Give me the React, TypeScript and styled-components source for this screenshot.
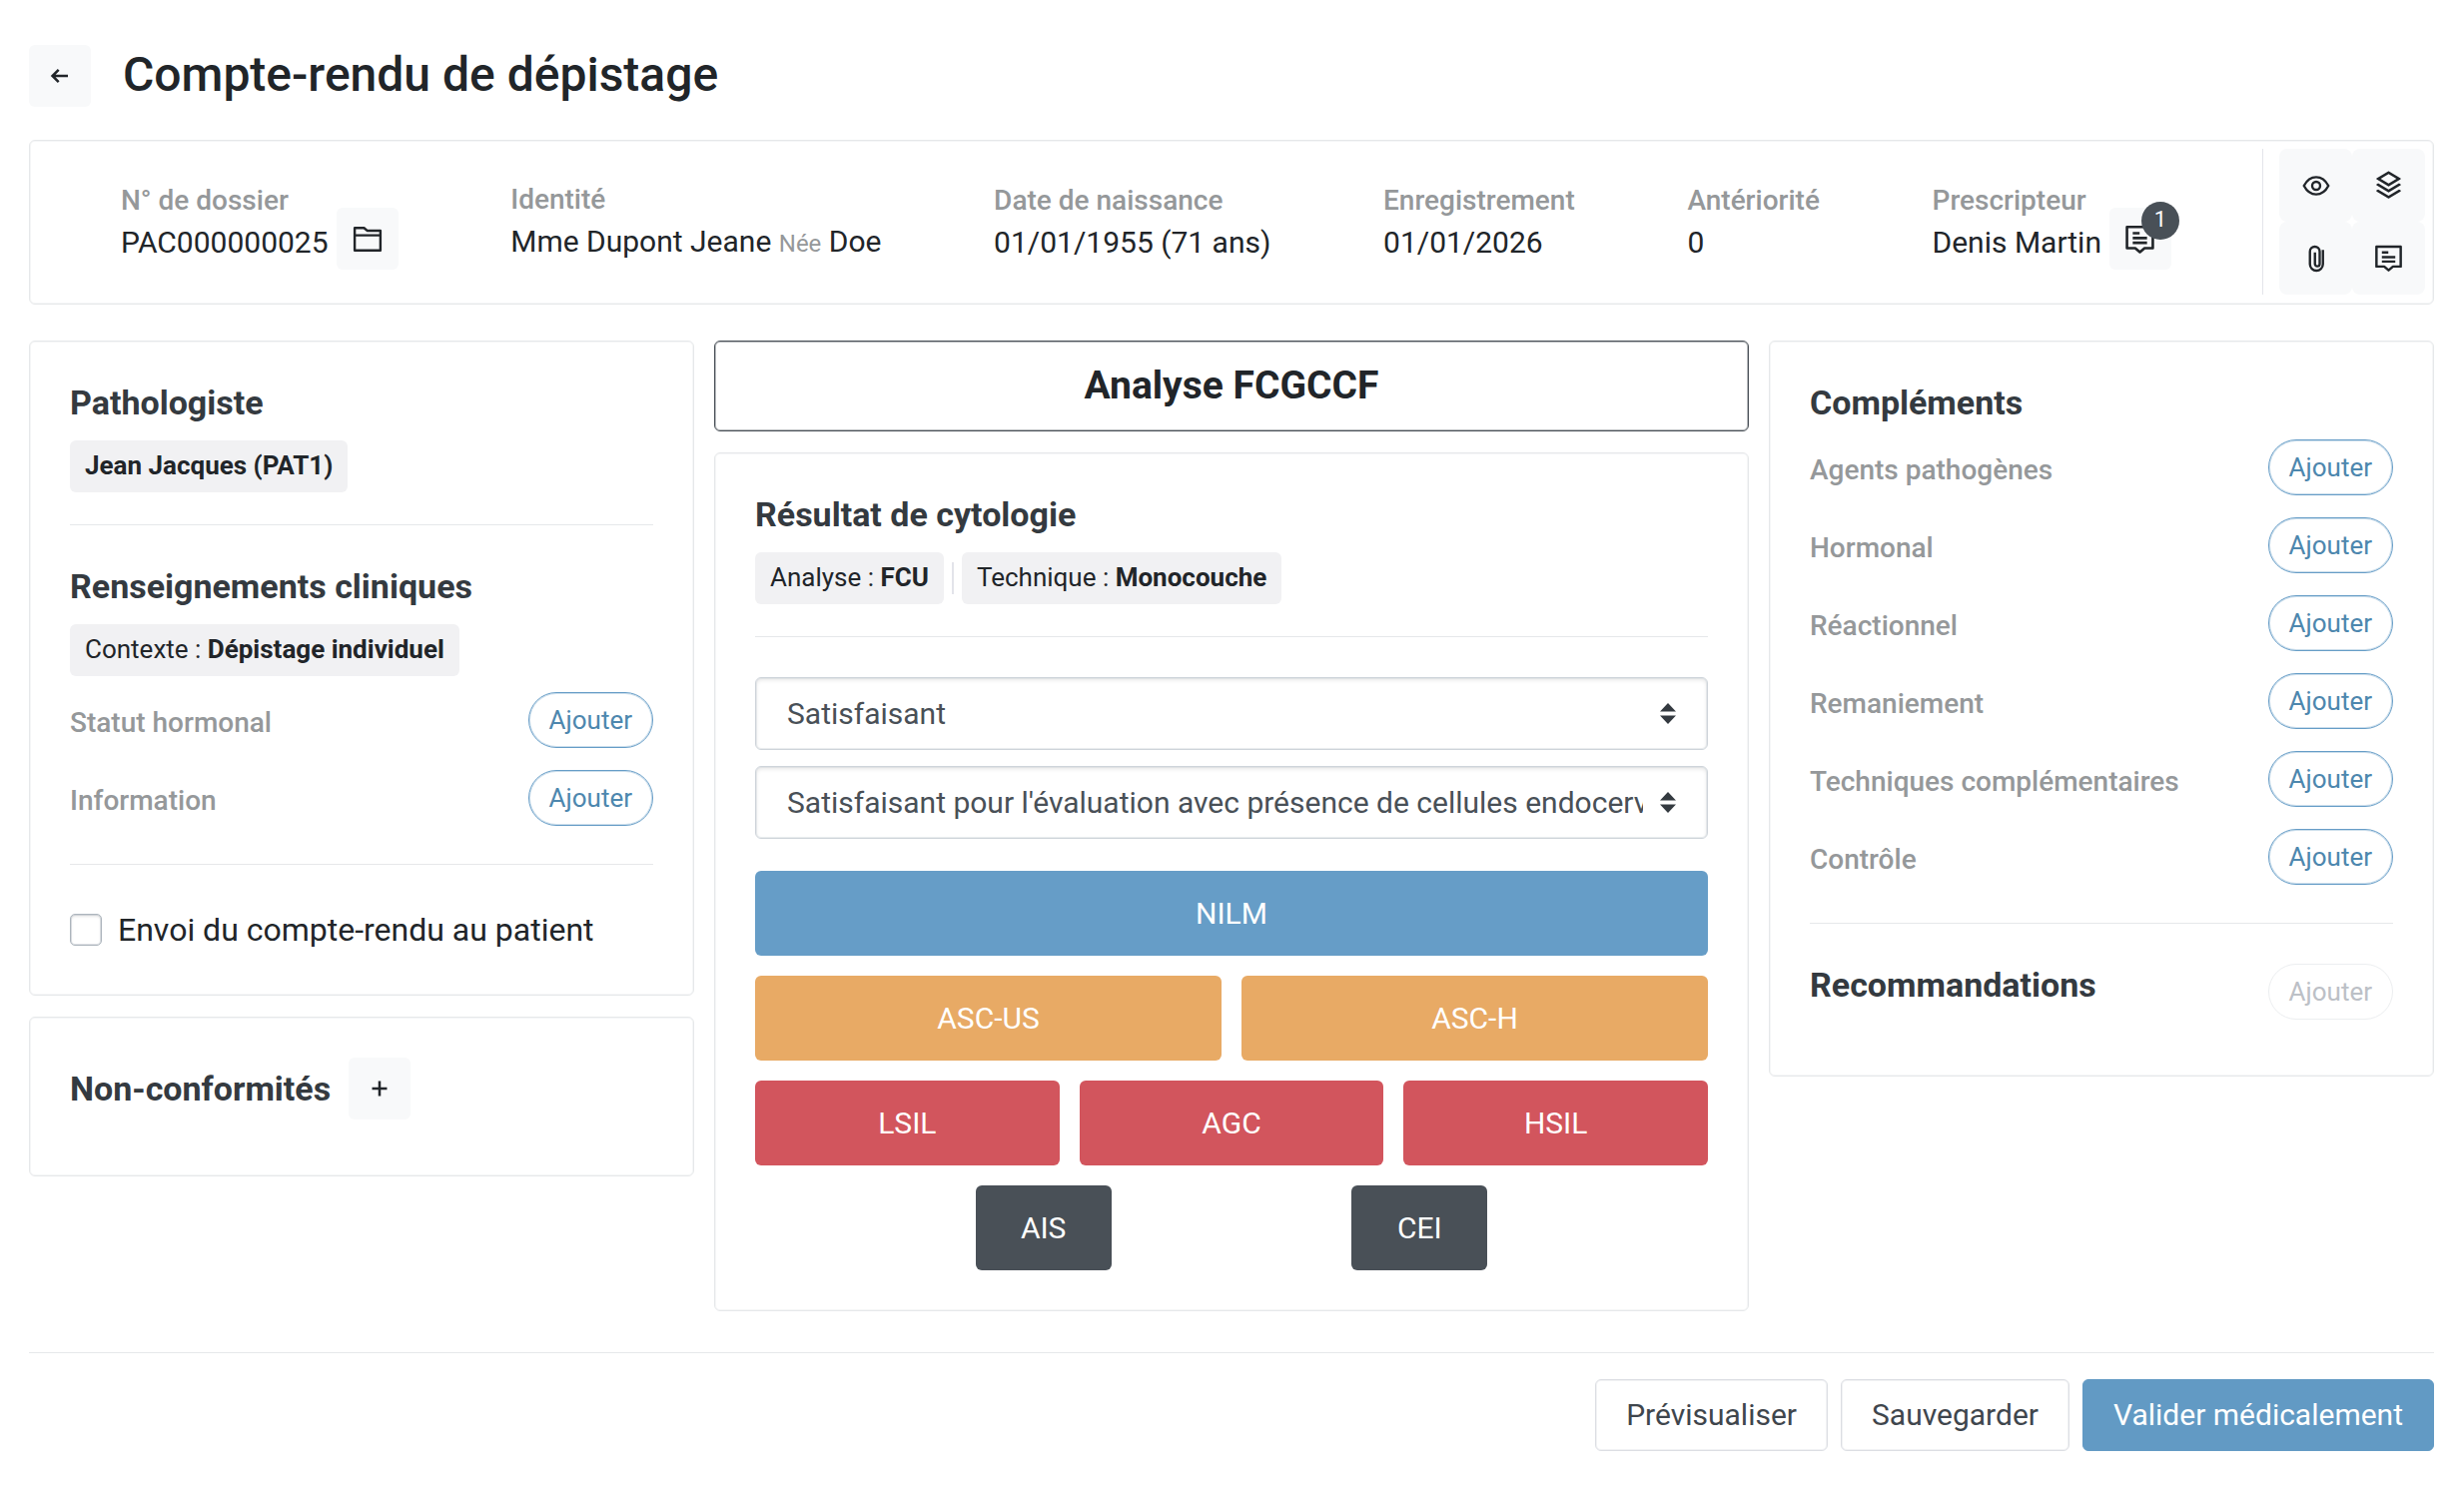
import React from "react";
import styled, { createGlobalStyle } from "styled-components";
import { RiStackLine } from "react-icons/ri";

const color = {
  text: "#212529",
  title: "#343a40",
  muted: "#95989a",
  line: "#e6e8ea",
  soft: "#f8f9fa",
  badge: "#f1f1f3",
  blue: "#669dc7",
  blueText: "#4d87ae",
  orange: "#e8aa65",
  red: "#d2555d",
  dark: "#495057",
};

const GlobalStyle = createGlobalStyle`
  *, *::before, *::after { box-sizing: border-box; }
  body {
    margin: 0;
    background: #fff;
    color: ${color.text};
    font-family: Roboto, "Liberation Sans", sans-serif;
    font-size: 30px;
    line-height: 44px;
  }
  button, select, input { font: inherit; margin: 0; }
  button { cursor: pointer; }
  h1, h2, h3, p, dl, dt, dd, ul { margin: 0; padding: 0; }
`;

const Page = styled.div`
  padding: 45px 30px 37px 29px;
`;

const Header = styled.header`
  display: flex;
  align-items: center;
  gap: 32px;
  margin-bottom: 33px;
`;

const PageTitle = styled.h1`
  padding-bottom: 2px;
  font-size: 48px;
  line-height: 58px;
  font-weight: 500;
`;

const IconButton = styled.button`
  display: inline-flex;
  align-items: center;
  justify-content: center;
  flex: none;
  position: relative;
  width: 62px;
  height: 62px;
  padding: 0;
  border: 0;
  border-radius: 6px;
  background: ${color.soft};
  color: ${color.text};
`;

const Card = styled.section`
  border: 1px solid ${color.line};
  border-radius: 6px;
  background: #fff;
  box-shadow: inset 0 0 0 1px rgba(230, 232, 234, 0.4);
`;

const PatientCard = styled(Card)`
  display: flex;
  padding: 8px 8px 9px;
  margin-bottom: 36px;
`;

const PatientFields = styled.dl`
  flex: 1;
  display: flex;
  align-items: center;
  justify-content: space-between;
  padding: 2px 91px 0 83px;
`;

const FieldLabel = styled.dt`
  font-size: 28px;
  line-height: 40px;
  font-weight: 500;
  color: ${color.muted};
`;

const FieldValue = styled.dd`
  display: flex;
  white-space: pre;

  ${IconButton} {
    margin: -13px 0 -5px 8px;
  }
`;

const BirthName = styled.span`
  font-size: 24px;
  color: ${color.muted};
`;

const Count = styled.span`
  position: absolute;
  top: -6px;
  right: -8px;
  width: 38px;
  height: 38px;
  border-radius: 50%;
  background: ${color.dark};
  color: #fff;
  font-size: 22px;
  line-height: 36px;
  text-align: center;
`;

const Toolbar = styled.div`
  display: grid;
  grid-template-columns: 73px 73px;
  padding-left: 16px;
  border-left: 1px solid #e3e5ea;

  ${IconButton} {
    width: 73px;
    height: 73px;
    border-radius: 8px;
  }
`;

const Columns = styled.main`
  display: grid;
  grid-template-columns: 9fr 14fr 9fr;
  align-items: start;
  gap: 20px;
  padding-bottom: 41px;
  border-bottom: 1px solid ${color.line};
`;

const Column = styled.div`
  display: grid;
  gap: 21px;
  min-width: 0;
`;

const Panel = styled(Card)`
  padding: 40px;
  min-width: 0;
`;

const PanelTitle = styled.h2`
  font-size: 34px;
  line-height: 42px;
  font-weight: 700;
  color: ${color.title};
`;

const Divider = styled.hr`
  height: 1px;
  margin: 32px 0 40px;
  border: 0;
  background: ${color.line};
`;

const Badges = styled.div`
  display: flex;
  align-items: center;
  gap: 8px;
  margin-top: 17px;
`;

const Badge = styled.span`
  padding: 0 15px 2px;
  border-radius: 6px;
  background: ${color.badge};
  font-size: 26px;
  line-height: 50px;

  b {
    font-weight: 700;
  }
`;

const BadgeSeparator = styled.span`
  width: 2px;
  height: 32px;
  background: #e3e4ea;
`;

const Rows = styled.ul`
  display: grid;
  gap: 22px;
  margin-top: 16px;
  padding-bottom: 6px;
  list-style: none;
`;

const Row = styled.li`
  display: flex;
  align-items: center;
  justify-content: space-between;
`;

const RowLabel = styled.span`
  padding-top: 6px;
  font-size: 28px;
  line-height: 40px;
  font-weight: 500;
  color: ${color.muted};
`;

const AddButton = styled.button`
  height: 56px;
  padding: 0 20px;
  border: 1px solid ${color.blue};
  border-radius: 28px;
  background: #fff;
  box-shadow: inset 0 0 0 1px rgba(102, 157, 199, 0.35);
  color: ${color.blueText};
  font-size: 26px;
  line-height: 52px;

  &:disabled {
    border-color: #eceef0;
    box-shadow: none;
    color: #bcc0c6;
    cursor: default;
  }
`;

const CheckLabel = styled.label`
  display: flex;
  align-items: center;
  gap: 16px;
  font-size: 32px;
  line-height: 50px;
`;

const Checkbox = styled.input`
  appearance: none;
  flex: none;
  width: 32px;
  height: 32px;
  border: 1px solid #adb5bd;
  border-radius: 5px;
  background: #fff;
  box-shadow:
    inset 0 0 0 1px rgba(173, 181, 189, 0.4),
    inset 0 2px 3px rgba(0, 0, 0, 0.1);

  &:checked {
    background: ${color.blue};
  }
`;

const PanelRow = styled.div<{ $spread?: boolean }>`
  display: flex;
  align-items: ${(p) => (p.$spread ? "flex-start" : "center")};
  justify-content: ${(p) => (p.$spread ? "space-between" : "flex-start")};
  gap: 18px;
  padding-bottom: 16px;
`;

const AnalysisTitle = styled.h2`
  padding: 22px 20px;
  border: 1px solid ${color.dark};
  border-radius: 6px;
  box-shadow: inset 0 0 0 1px rgba(73, 80, 87, 0.4);
  font-size: 39px;
  line-height: 45px;
  font-weight: 700;
  text-align: center;
`;

const Selects = styled.div`
  display: grid;
  gap: 16px;
  margin-bottom: 32px;
`;

const SelectBox = styled.div`
  position: relative;

  svg {
    position: absolute;
    top: 26px;
    right: 32px;
    pointer-events: none;
  }
`;

const Select = styled.select`
  appearance: none;
  display: block;
  width: 100%;
  height: 73px;
  padding: 0 64px 0 31px;
  border: 1px solid #ced4da;
  border-radius: 6px;
  background: #fff;
  box-shadow:
    inset 0 0 0 1px rgba(206, 212, 218, 0.4),
    inset 0 2px 4px rgba(0, 0, 0, 0.1);
  color: ${color.dark};
`;

const Results = styled.div`
  display: grid;
  gap: 20px;
`;

const ResultRow = styled.div`
  display: flex;
  gap: 20px;
`;

const CompactRow = styled.div`
  display: flex;
  justify-content: space-evenly;
  margin: 0 -10px;
`;

const ResultButton = styled.button<{ $bg: string }>`
  flex: 1;
  height: 85px;
  padding: 0;
  border: 0;
  border-radius: 6px;
  background: ${(p) => p.$bg};
  color: #fff;
  line-height: 85px;

  ${CompactRow} & {
    flex: none;
    width: 136px;
    margin: 0 10px;
  }
`;

const Footer = styled.footer`
  display: flex;
  justify-content: flex-end;
  gap: 13px;
  padding-top: 26px;
`;

const ActionButton = styled.button<{ $primary?: boolean }>`
  height: 72px;
  padding: 0 30px;
  border: 1px solid ${(p) => (p.$primary ? "#629ac4" : "#dcdee3")};
  border-radius: 6px;
  background: ${(p) => (p.$primary ? "#629ac4" : "#fff")};
  box-shadow: ${(p) => (p.$primary ? "none" : "inset 0 0 0 1px rgba(220, 222, 227, 0.4)")};
  color: ${(p) => (p.$primary ? "#fff" : "#3f464d")};
`;

type IconProps = { size?: number; children: React.ReactNode };

const Icon = ({ size = 30, children }: IconProps) => (
  <svg
    width={size}
    height={size}
    viewBox="0 0 24 24"
    fill="none"
    stroke="currentColor"
    strokeWidth="1.9"
    aria-hidden="true"
  >
    {children}
  </svg>
);

const ArrowLeft = () => (
  <Icon size={32}>
    <path d="M18 12H6.8M11 7.4 6.4 12l4.6 4.6" />
  </Icon>
);

const Plus = () => (
  <Icon size={32}>
    <path d="M12 6.4v11.2M6.4 12h11.2" />
  </Icon>
);

const Folder = () => (
  <Icon size={34}>
    <path d="M2.9 4.4h6.6l2.2 1.9h9.4v14H2.9zM2.9 9.6h18.2" strokeLinejoin="round" strokeWidth="1.7" />
  </Icon>
);

const Comment = ({ size }: { size?: number }) => (
  <Icon size={size}>
    <path d="M2.6 3.1h18.8v15.4h-6L12 21.4l-3.4-2.9h-6z" strokeLinejoin="round" />
    <path d="M6.8 7.6h5M6.8 11.2h10.4M6.8 14.6h10.4" />
  </Icon>
);

const Eye = () => (
  <Icon>
    <path d="M2.2 12C4.6 7.4 8 5.1 12 5.1s7.4 2.3 9.8 6.9c-2.4 4.6-5.8 6.9-9.8 6.9S4.6 16.6 2.2 12z" />
    <circle cx="12" cy="12" r="3.2" />
  </Icon>
);

const Paperclip = () => (
  <Icon>
    <path d="M17.4 5v11.4a5.2 5.2 0 0 1-10.4 0V6.3a3.9 3.9 0 0 1 7.8 0v9.9a1.9 1.9 0 0 1-3.8 0V7" />
  </Icon>
);

const Sorter = () => (
  <svg width="16" height="21" viewBox="0 0 16 21" fill="#343a40" aria-hidden="true">
    <path d="M0 8.5 8 0l8 8.5zM0 12.5h16L8 21z" />
  </svg>
);

type FieldProps = { label: string; children: React.ReactNode };

const Field = ({ label, children }: FieldProps) => (
  <div>
    <FieldLabel>{label}</FieldLabel>
    <FieldValue>{children}</FieldValue>
  </div>
);

const AddRows = ({ labels }: { labels: string[] }) => (
  <Rows>
    {labels.map((label) => (
      <Row key={label}>
        <RowLabel>{label}</RowLabel>
        <AddButton type="button">Ajouter</AddButton>
      </Row>
    ))}
  </Rows>
);

const Choice = ({ label, option }: { label: string; option: string }) => (
  <SelectBox>
    <Select aria-label={label} defaultValue={option}>
      <option>{option}</option>
    </Select>
    <Sorter />
  </SelectBox>
);

export default function App() {
  return (
    <>
      <GlobalStyle />
      <Page>
        <Header>
          <IconButton type="button" aria-label="Retour">
            <ArrowLeft />
          </IconButton>
          <PageTitle>Compte-rendu de dépistage</PageTitle>
        </Header>

        <PatientCard>
          <PatientFields>
            <Field label="N° de dossier">
              PAC000000025
              <IconButton type="button" aria-label="Ouvrir le dossier">
                <Folder />
              </IconButton>
            </Field>
            <Field label="Identité">
              <span>
                Mme Dupont Jeane <BirthName>Née</BirthName> Doe
              </span>
            </Field>
            <Field label="Date de naissance">01/01/1955 (71 ans)</Field>
            <Field label="Enregistrement">01/01/2026</Field>
            <Field label="Antériorité">0</Field>
            <Field label="Prescripteur">
              Denis Martin
              <IconButton type="button" aria-label="Commentaires du prescripteur">
                <Comment size={33} />
                <Count>1</Count>
              </IconButton>
            </Field>
          </PatientFields>
          <Toolbar>
            <IconButton type="button" aria-label="Aperçu">
              <Eye />
            </IconButton>
            <IconButton type="button" aria-label="Historique">
              <RiStackLine size={31} />
            </IconButton>
            <IconButton type="button" aria-label="Pièces jointes">
              <Paperclip />
            </IconButton>
            <IconButton type="button" aria-label="Commentaires">
              <Comment size={31} />
            </IconButton>
          </Toolbar>
        </PatientCard>

        <Columns>
          <Column>
            <Panel>
              <PanelTitle>Pathologiste</PanelTitle>
              <Badges>
                <Badge>
                  <b>Jean Jacques (PAT1)</b>
                </Badge>
              </Badges>
              <Divider />
              <PanelTitle>Renseignements cliniques</PanelTitle>
              <Badges>
                <Badge>
                  Contexte : <b>Dépistage individuel</b>
                </Badge>
              </Badges>
              <AddRows labels={["Statut hormonal", "Information"]} />
              <Divider />
              <CheckLabel>
                <Checkbox type="checkbox" />
                Envoi du compte-rendu au patient
              </CheckLabel>
            </Panel>
            <Panel>
              <PanelRow>
                <PanelTitle>Non-conformités</PanelTitle>
                <IconButton type="button" aria-label="Ajouter une non-conformité">
                  <Plus />
                </IconButton>
              </PanelRow>
            </Panel>
          </Column>

          <Column>
            <AnalysisTitle>Analyse FCGCCF</AnalysisTitle>
            <Panel>
              <PanelTitle>Résultat de cytologie</PanelTitle>
              <Badges>
                <Badge>
                  Analyse : <b>FCU</b>
                </Badge>
                <BadgeSeparator />
                <Badge>
                  Technique : <b>Monocouche</b>
                </Badge>
              </Badges>
              <Divider />
              <Selects>
                <Choice label="Qualité du prélèvement" option="Satisfaisant" />
                <Choice
                  label="Précision"
                  option="Satisfaisant pour l'évaluation avec présence de cellules endocervicales"
                />
              </Selects>
              <Results>
                <ResultRow>
                  <ResultButton $bg={color.blue}>NILM</ResultButton>
                </ResultRow>
                <ResultRow>
                  <ResultButton $bg={color.orange}>ASC-US</ResultButton>
                  <ResultButton $bg={color.orange}>ASC-H</ResultButton>
                </ResultRow>
                <ResultRow>
                  <ResultButton $bg={color.red}>LSIL</ResultButton>
                  <ResultButton $bg={color.red}>AGC</ResultButton>
                  <ResultButton $bg={color.red}>HSIL</ResultButton>
                </ResultRow>
                <CompactRow>
                  <ResultButton $bg={color.dark}>AIS</ResultButton>
                  <ResultButton $bg={color.dark}>CEI</ResultButton>
                </CompactRow>
              </Results>
            </Panel>
          </Column>

          <Column>
            <Panel>
              <PanelTitle>Compléments</PanelTitle>
              <AddRows
                labels={[
                  "Agents pathogènes",
                  "Hormonal",
                  "Réactionnel",
                  "Remaniement",
                  "Techniques complémentaires",
                  "Contrôle",
                ]}
              />
              <Divider />
              <PanelRow $spread>
                <PanelTitle>Recommandations</PanelTitle>
                <AddButton type="button" disabled>
                  Ajouter
                </AddButton>
              </PanelRow>
            </Panel>
          </Column>
        </Columns>

        <Footer>
          <ActionButton type="button">Prévisualiser</ActionButton>
          <ActionButton type="button">Sauvegarder</ActionButton>
          <ActionButton type="button" $primary>
            Valider médicalement
          </ActionButton>
        </Footer>
      </Page>
    </>
  );
}
